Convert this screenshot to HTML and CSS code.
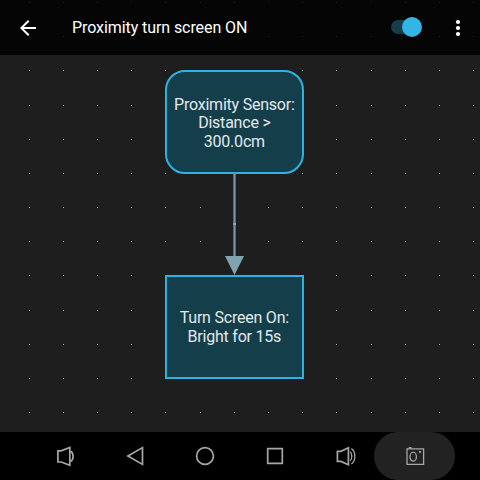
FILE: index.html
```
<!DOCTYPE html>
<html lang="en">
<head>
<meta charset="utf-8">
<title>Proximity turn screen ON</title>
<link rel="stylesheet" href="styles.css">
</head>
<body>
<div class="screen">
  <svg class="grid" width="480" height="432" viewBox="0 0 480 432" aria-hidden="true">
    <defs><path id="row" d="M29 .5H480"/></defs>
    <use href="#row" y="2"/><use href="#row" y="36"/><use href="#row" y="70"/><use href="#row" y="105"/>
    <use href="#row" y="139"/><use href="#row" y="173"/><use href="#row" y="207"/><use href="#row" y="241"/>
    <use href="#row" y="275"/><use href="#row" y="310"/><use href="#row" y="344"/><use href="#row" y="378"/>
    <use href="#row" y="412"/>
  </svg>
  <header class="bar">
    <svg class="back" width="24" height="24" viewBox="0 0 24 24"><path d="M20 11H7.83l5.59-5.59L12 4l-8 8 8 8 1.41-1.41L7.83 13H20z"/></svg>
    <h1 class="title">Proximity turn screen ON</h1>
    <span class="switch"><span class="thumb"></span></span>
    <svg class="more" width="24" height="24" viewBox="0 0 24 24"><circle cx="12" cy="6" r="2.1"/><circle cx="12" cy="12" r="2.1"/><circle cx="12" cy="18" r="2.1"/></svg>
  </header>
  <main class="canvas">
    <div class="node trigger">Proximity Sensor:<br>Distance &gt;<br>300.0cm</div>
    <div class="node action">Turn Screen On:<br>Bright for 15s</div>
    <svg class="link" width="20" height="105" viewBox="0 0 20 105"><path class="stem" d="M9.5 1V86"/><path class="joint" d="M9.5 52v2"/><path class="head" d="M0 85H19L9.5 104z"/></svg>
  </main>
  <nav class="nav">
    <svg width="24" height="24" viewBox="0 0 24 24"><path d="M4.9 6.8H8.2L16.8 3.4V21.2L8.2 18H4.9zM17.8 7.2C20.8 9 20.8 15.6 17.8 17.4"/></svg>
    <svg width="24" height="24" viewBox="0 0 24 24"><path d="M4.9 12L19.5 3.6V20.4z"/></svg>
    <svg width="24" height="24" viewBox="0 0 24 24"><circle cx="12" cy="12" r="8.4"/></svg>
    <svg width="24" height="24" viewBox="0 0 24 24"><path d="M4.7 4.7H19.3V19.3H4.7z"/></svg>
    <svg width="24" height="24" viewBox="0 0 24 24"><path d="M4.4 7.3H7.9L15.4 3.8V20.8L7.9 17.4H4.4z"/><path class="fine" d="M17 7.8C19.4 9.5 19.4 15 17 16.7M18.4 4.4C23 8 23 16.5 18.4 20.1"/></svg>
    <span class="capture"><svg width="24" height="24" viewBox="0 0 24 24"><path class="fine" d="M4 4.8H20.6V20.3H4z"/><ellipse class="fine" cx="10.2" cy="12.7" rx="3.2" ry="4.5"/><path d="M5.8 3.8H8.5M16 7.8H18"/></svg></span>
  </nav>
</div>
</body>
</html>
```
FILE: styles.css
```
* { box-sizing: border-box; }
body {
  margin: 0;
  background: #000;
  font-family: Roboto, "Liberation Sans", sans-serif;
}
.screen {
  position: relative;
  display: flex;
  flex-direction: column;
  width: 480px;
  height: 480px;
  overflow: hidden;
  background: #1e1e1e;
}
.grid {
  position: absolute;
  top: 0;
  left: 0;
  stroke: #a8a8a8;
  stroke-width: 1;
  stroke-dasharray: 1 33 1 33 1 33 1 33 1 34 1 33 1 33 1 33 1 33 1 34 1 33 1 33 1 33 1 33;
}
.bar {
  position: relative;
  display: flex;
  align-items: center;
  height: 55px;
  padding: 0 10px 0 16px;
  background: rgba(0, 0, 0, .82);
  color: #fff;
}
.back, .more { fill: #fff; flex: none; }
.title {
  flex: 1;
  margin: 0 0 0 32px;
  font-size: 16px;
  font-weight: 400;
  line-height: 24px;
  letter-spacing: -.08px;
  white-space: nowrap;
}
.switch {
  display: flex;
  justify-content: flex-end;
  align-items: center;
  width: 28px;
  height: 14px;
  margin: -1px 27px 0 0;
  border-radius: 7px;
  background: #153d4a;
}
.thumb {
  flex: none;
  width: 20.5px;
  height: 20.5px;
  margin-right: -3px;
  border-radius: 50%;
  background: #33b5e5;
}
.canvas { position: relative; flex: 1; }
.node {
  position: absolute;
  left: 165px;
  display: flex;
  align-items: center;
  justify-content: center;
  width: 138.7px;
  height: 104px;
  padding-top: 2px;
  border: 2px solid #2fb1e3;
  background: #153e4b;
  color: #e3e9eb;
  font-size: 16px;
  letter-spacing: -.22px;
  line-height: 18.75px;
  text-align: center;
  white-space: nowrap;
}
.trigger { top: 15px; padding-top: 3.5px; border-radius: 20px; }
.action { top: 220px; }
.link { position: absolute; left: 225px; top: 116px; }
.stem { stroke: #7497a5; stroke-width: 2.3; }
.joint { stroke: #88abba; stroke-width: 2.6; }
.head { fill: #80a3b1; }
.nav {
  position: relative;
  display: flex;
  align-items: center;
  gap: 46px;
  height: 48px;
  padding-left: 53px;
  background: #000;
}
.nav svg {
  flex: none;
  fill: none;
  stroke: #a6a6a6;
  stroke-width: 1.7;
}
.nav .fine { stroke-width: 1.3; }
.capture {
  display: flex;
  align-items: center;
  justify-content: center;
  width: 81px;
  height: 48px;
  margin-left: -29px;
  border-radius: 24px;
  background: #222;
}
```
